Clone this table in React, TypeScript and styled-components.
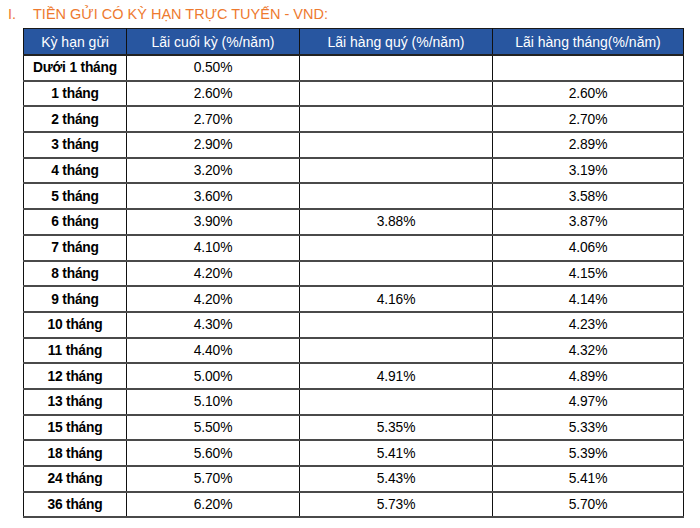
import styled, { createGlobalStyle } from 'styled-components';

const GlobalStyle = createGlobalStyle`
  html, body {
    margin: 0;
    padding: 0;
    background: #ffffff;
  }
  body {
    font-family: 'Liberation Sans', Arial, sans-serif;
  }
`;

interface RateRow {
  term: string;
  endOfTerm: string;
  quarterly?: string;
  monthly?: string;
}

const rates: RateRow[] = [
  { term: 'Dưới 1 tháng', endOfTerm: '0.50%' },
  { term: '1 tháng', endOfTerm: '2.60%', monthly: '2.60%' },
  { term: '2 tháng', endOfTerm: '2.70%', monthly: '2.70%' },
  { term: '3 tháng', endOfTerm: '2.90%', monthly: '2.89%' },
  { term: '4 tháng', endOfTerm: '3.20%', monthly: '3.19%' },
  { term: '5 tháng', endOfTerm: '3.60%', monthly: '3.58%' },
  { term: '6 tháng', endOfTerm: '3.90%', quarterly: '3.88%', monthly: '3.87%' },
  { term: '7 tháng', endOfTerm: '4.10%', monthly: '4.06%' },
  { term: '8 tháng', endOfTerm: '4.20%', monthly: '4.15%' },
  { term: '9 tháng', endOfTerm: '4.20%', quarterly: '4.16%', monthly: '4.14%' },
  { term: '10 tháng', endOfTerm: '4.30%', monthly: '4.23%' },
  { term: '11 tháng', endOfTerm: '4.40%', monthly: '4.32%' },
  { term: '12 tháng', endOfTerm: '5.00%', quarterly: '4.91%', monthly: '4.89%' },
  { term: '13 tháng', endOfTerm: '5.10%', monthly: '4.97%' },
  { term: '15 tháng', endOfTerm: '5.50%', quarterly: '5.35%', monthly: '5.33%' },
  { term: '18 tháng', endOfTerm: '5.60%', quarterly: '5.41%', monthly: '5.39%' },
  { term: '24 tháng', endOfTerm: '5.70%', quarterly: '5.43%', monthly: '5.41%' },
  { term: '36 tháng', endOfTerm: '6.20%', quarterly: '5.73%', monthly: '5.70%' },
];

const Page = styled.div`
  width: 700px;
  height: 528px;
  overflow: hidden;
`;

const Title = styled.h2`
  display: flex;
  margin: 0;
  padding: 6px 0 0 8px;
  height: 28px;
  box-sizing: border-box;
  font-size: 14.5px;
  line-height: 16px;
  font-weight: normal;
  color: #ee7a2f;
`;

const TitleNumber = styled.span`
  width: 25px;
`;

const RateTable = styled.table`
  margin-left: 23px;
  width: 660px;
  table-layout: fixed;
  border-collapse: collapse;
  border: 1px solid #1a1a1a;
`;

const HeadCell = styled.th`
  height: 25px;
  padding: 0;
  background: #2856a0;
  color: #ffffff;
  font-size: 14px;
  font-weight: normal;
  text-align: center;
  border-left: 1px solid #111;
  border-right: 1px solid #111;
  border-bottom: 2px solid #222;
`;

const Row = styled.tr`
  height: 25.7px;
`;

const Cell = styled.td<{ $bold?: boolean }>`
  padding: 0;
  text-align: center;
  color: #000;
  font-size: 13.8px;
  font-weight: ${({ $bold }) => ($bold ? 'bold' : 'normal')};
  letter-spacing: ${({ $bold }) => ($bold ? '-0.2px' : '-0.1px')};
  border-left: 1px solid #111;
  border-right: 1px solid #111;
  border-bottom: 2px solid #4a4a4a;
`;

export default function App() {
  return (
    <Page>
      <GlobalStyle />
      <Title>
        <TitleNumber>I.</TitleNumber>
        TIỀN GỬI CÓ KỲ HẠN TRỰC TUYẾN - VND:
      </Title>
      <RateTable>
        <colgroup>
          <col style={{ width: 103 }} />
          <col style={{ width: 173 }} />
          <col style={{ width: 193 }} />
          <col style={{ width: 191 }} />
        </colgroup>
        <thead>
          <tr>
            <HeadCell>Kỳ hạn gửi</HeadCell>
            <HeadCell>Lãi cuối kỳ (%/năm)</HeadCell>
            <HeadCell>Lãi hàng quý (%/năm)</HeadCell>
            <HeadCell>Lãi hàng tháng(%/năm)</HeadCell>
          </tr>
        </thead>
        <tbody>
          {rates.map((r) => (
            <Row key={r.term}>
              <Cell $bold>{r.term}</Cell>
              <Cell>{r.endOfTerm}</Cell>
              <Cell>{r.quarterly ?? ''}</Cell>
              <Cell>{r.monthly ?? ''}</Cell>
            </Row>
          ))}
        </tbody>
      </RateTable>
    </Page>
  );
}
